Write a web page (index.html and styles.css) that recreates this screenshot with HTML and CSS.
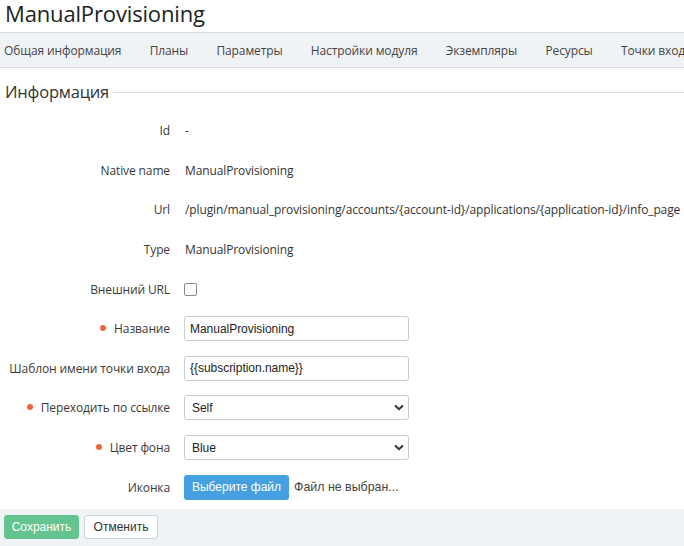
FILE: index.html
```html
<!DOCTYPE html>
<html lang="ru">
<head>
<meta charset="utf-8">
<title>ManualProvisioning</title>
<link rel="stylesheet" href="styles.css">
</head>
<body>
<div class="page">
  <h1 class="title">ManualProvisioning</h1>
  <nav class="tabs">
    <a class="tab">Общая информация</a>
    <a class="tab">Планы</a>
    <a class="tab">Параметры</a>
    <a class="tab">Настройки модуля</a>
    <a class="tab">Экземпляры</a>
    <a class="tab">Ресурсы</a>
    <a class="tab">Точки входа</a>
  </nav>
  <section class="info">
    <h2 class="legend"><span>Информация</span></h2>
    <div class="form">
      <div class="row"><div class="label">Id</div><div class="value">-</div></div>
      <div class="row"><div class="label">Native name</div><div class="value">ManualProvisioning</div></div>
      <div class="row"><div class="label">Url</div><div class="value nowrap">/plugin/manual_provisioning/accounts/{account-id}/applications/{application-id}/info_page</div></div>
      <div class="row"><div class="label">Type</div><div class="value">ManualProvisioning</div></div>
      <div class="row"><div class="label">Внешний URL</div><div class="value"><input class="check" type="checkbox"></div></div>
      <div class="row"><div class="label required">Название</div><div class="value"><input class="field" type="text" value="ManualProvisioning"></div></div>
      <div class="row"><div class="label">Шаблон имени точки входа</div><div class="value"><input class="field" type="text" value="{{subscription.name}}"></div></div>
      <div class="row"><div class="label required">Переходить по ссылке</div><div class="value"><span class="select-wrap"><select class="field select"><option>Self</option></select><svg class="chev" width="10" height="7" viewBox="0 0 10 7"><path d="M1 1.5 L5 5.2 L9 1.5" fill="none" stroke="#333" stroke-width="2"/></svg></span></div></div>
      <div class="row"><div class="label required">Цвет фона</div><div class="value"><span class="select-wrap"><select class="field select"><option>Blue</option></select><svg class="chev" width="10" height="7" viewBox="0 0 10 7"><path d="M1 1.5 L5 5.2 L9 1.5" fill="none" stroke="#333" stroke-width="2"/></svg></span></div></div>
      <div class="row"><div class="label">Иконка</div><div class="value"><button class="file-btn" type="button">Выберите файл</button><span class="file-name">Файл не выбран...</span></div></div>
    </div>
  </section>
  <footer class="actions">
    <button class="btn btn-save" type="button">Сохранить</button>
    <button class="btn btn-cancel" type="button">Отменить</button>
  </footer>
</div>
</body>
</html>
```

FILE: styles.css
```css
* { box-sizing: border-box; }
html, body { margin: 0; padding: 0; background: #fff; }
body {
  font-family: "Open Sans", "Noto Sans", sans-serif;
  font-size: 12px;
  letter-spacing: -0.12px;
  color: #333;
  overflow: hidden;
}
.page { width: 684px; height: 546px; display: flex; flex-direction: column; }
.title {
  margin: 0;
  height: 32px;
  padding-left: 5px;
  font-weight: 400;
  font-size: 22px;
  letter-spacing: -0.15px;
  line-height: 26px;
  color: #222;
}
.tabs {
  display: flex;
  gap: 28.3px;
  height: 36px;
  align-items: center;
  padding-left: 4px;
  background: #f0f3f6;
  border-top: 1px solid #d9dde2;
  border-bottom: 1px solid #d9dde2;
  white-space: nowrap;
  overflow: hidden;
}
.tab { color: #444; }
.info { flex: 1; }
.legend {
  margin: 0;
  height: 43px;
  display: flex;
  align-items: center;
  gap: 4px;
  padding-left: 5px;
  padding-top: 3px;
  font-weight: 400;
  font-size: 16.5px;
  letter-spacing: -0.2px;
  color: #333;
}
.legend::after {
  content: "";
  flex: 1;
  height: 1px;
  background: #dadee3;
  margin-top: 2px;
}
.form { display: flex; flex-direction: column; }
.row { display: flex; align-items: center; height: 39.6px; }
.label {
  width: 170px;
  flex: none;
  text-align: right;
  white-space: nowrap;
  color: #3a3a3a;
}
.label.required::before {
  content: "";
  display: inline-block;
  width: 6px;
  height: 6px;
  border-radius: 50%;
  background: #f0643a;
  margin-right: 8px;
  vertical-align: 2px;
}
.value {
  margin-left: 15px;
  display: flex;
  align-items: center;
  color: #333;
}
.nowrap { white-space: nowrap; }
.check {
  appearance: none;
  -webkit-appearance: none;
  margin: 0 0 0 -1px;
  width: 13px;
  height: 13px;
  border: 1px solid #8a8a8a;
  border-radius: 2px;
  background: #fff;
}
.field {
  width: 225px;
  height: 25px;
  margin-left: -1px;
  border: 1px solid #c9ced6;
  border-radius: 3px;
  padding: 0 5px;
  font-family: "Liberation Sans", Arial, sans-serif;
  font-size: 12px;
  letter-spacing: -0.03px;
  color: #222;
  background: #fff;
  outline: none;
}
.select-wrap { position: relative; display: inline-flex; }
.select {
  appearance: none;
  -webkit-appearance: none;
  padding-left: 7px;
}
.chev { position: absolute; right: 5px; top: 9px; pointer-events: none; }
.file-btn {
  margin-left: -1px;
  height: 25px;
  width: 105px;
  border: none;
  border-radius: 3px;
  background: #44a0e0;
  color: #fff;
  font-family: "Liberation Sans", Arial, sans-serif;
  font-size: 12px;
  letter-spacing: 0;
  padding: 0;
}
.file-name {
  margin-left: 5px;
  font-family: "Liberation Sans", Arial, sans-serif;
  font-size: 12.4px;
  letter-spacing: 0;
  color: #444;
}
.actions {
  height: 37px;
  background: #f0f3f6;
  display: flex;
  align-items: center;
  gap: 5px;
  padding-left: 4px;
  padding-bottom: 1px;
}
.btn {
  height: 24px;
  border-radius: 3px;
  font-family: "Liberation Sans", Arial, sans-serif;
  font-size: 12px;
  letter-spacing: 0;
  padding: 0;
}
.btn-save {
  width: 75px;
  background: #63c48f;
  border: 1px solid #63c48f;
  color: #fff;
}
.btn-cancel {
  width: 74px;
  background: #fff;
  border: 1px solid #cfd4da;
  color: #333;
}
```
